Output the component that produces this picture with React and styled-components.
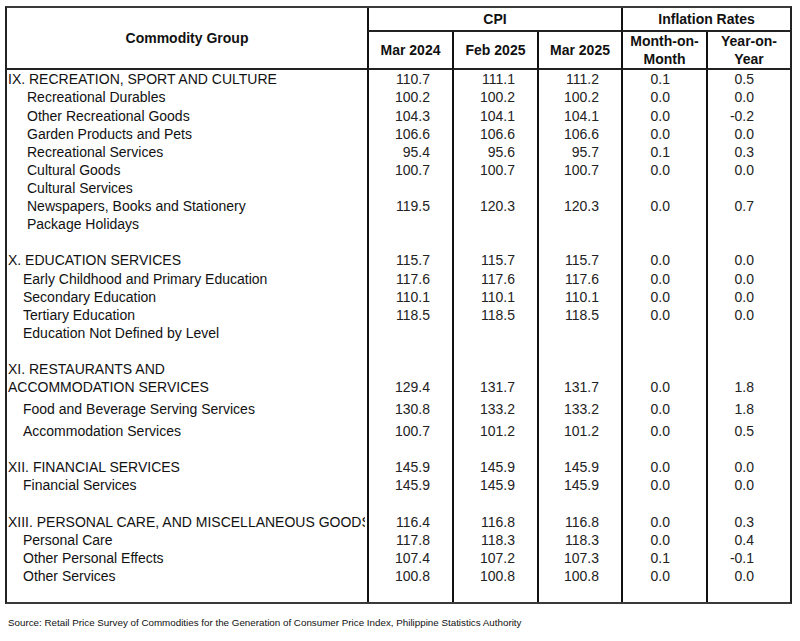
import React from 'react';
import styled, { createGlobalStyle } from 'styled-components';

const GlobalStyle = createGlobalStyle`
  * { box-sizing: border-box; }
  body {
    margin: 0;
    background: #fff;
    font-family: "Liberation Sans", Arial, sans-serif;
    color: #111;
  }
`;

const rows = [
  { label: 'IX. RECREATION, SPORT AND CULTURE', v: ['110.7', '111.1', '111.2', '0.1', '0.5'] },
  { label: 'Recreational Durables', indent: 20, v: ['100.2', '100.2', '100.2', '0.0', '0.0'] },
  { label: 'Other Recreational Goods', indent: 20, h: 19, v: ['104.3', '104.1', '104.1', '0.0', '-0.2'] },
  { label: 'Garden Products and Pets', indent: 20, v: ['106.6', '106.6', '106.6', '0.0', '0.0'] },
  { label: 'Recreational Services', indent: 20, v: ['95.4', '95.6', '95.7', '0.1', '0.3'] },
  { label: 'Cultural Goods', indent: 20, v: ['100.7', '100.7', '100.7', '0.0', '0.0'] },
  { label: 'Cultural Services', indent: 20 },
  { label: 'Newspapers, Books and Stationery', indent: 20, v: ['119.5', '120.3', '120.3', '0.0', '0.7'] },
  { label: 'Package Holidays', indent: 20 },
  { label: '' },
  { label: 'X. EDUCATION SERVICES', v: ['115.7', '115.7', '115.7', '0.0', '0.0'] },
  { label: 'Early Childhood and Primary Education', indent: 16, h: 19, v: ['117.6', '117.6', '117.6', '0.0', '0.0'] },
  { label: 'Secondary Education', indent: 16, v: ['110.1', '110.1', '110.1', '0.0', '0.0'] },
  { label: 'Tertiary Education', indent: 16, v: ['118.5', '118.5', '118.5', '0.0', '0.0'] },
  { label: 'Education Not Defined by Level', indent: 16 },
  { label: '' },
  { label: 'XI. RESTAURANTS AND' },
  { label: 'ACCOMMODATION SERVICES', v: ['129.4', '131.7', '131.7', '0.0', '1.8'] },
  { label: 'Food and Beverage Serving Services', indent: 16, h: 26, v: ['130.8', '133.2', '133.2', '0.0', '1.8'] },
  { label: 'Accommodation Services', indent: 16, v: ['100.7', '101.2', '101.2', '0.0', '0.5'] },
  { label: '' },
  { label: 'XII. FINANCIAL SERVICES', v: ['145.9', '145.9', '145.9', '0.0', '0.0'] },
  { label: 'Financial Services', indent: 16, v: ['145.9', '145.9', '145.9', '0.0', '0.0'] },
  { label: '', h: 19 },
  { label: 'XIII. PERSONAL CARE, AND MISCELLANEOUS GOODS AND SERVICES', v: ['116.4', '116.8', '116.8', '0.0', '0.3'] },
  { label: 'Personal Care', indent: 16, v: ['117.8', '118.3', '118.3', '0.0', '0.4'] },
  { label: 'Other Personal Effects', indent: 16, v: ['107.4', '107.2', '107.3', '0.1', '-0.1'] },
  { label: 'Other Services', indent: 16, v: ['100.8', '100.8', '100.8', '0.0', '0.0'] },
  { label: '', h: 17 },
];

export default function App() {
  return (
    <Page>
      <GlobalStyle />
      <Table>
        <colgroup>
          <col style={{ width: 360 }} />
          <col style={{ width: 85 }} />
          <col style={{ width: 85 }} />
          <col style={{ width: 84 }} />
          <col style={{ width: 85 }} />
          <col style={{ width: 84 }} />
        </colgroup>
        <thead>
          <TopRow>
            <HeadCell rowSpan={2} $first>Commodity Group</HeadCell>
            <HeadCell colSpan={3}>CPI</HeadCell>
            <HeadCell colSpan={2}>Inflation Rates</HeadCell>
          </TopRow>
          <SubRow>
            <HeadCell>Mar 2024</HeadCell>
            <HeadCell>Feb 2025</HeadCell>
            <HeadCell>Mar 2025</HeadCell>
            <HeadCell>Month-on-<br />Month</HeadCell>
            <HeadCell>Year-on-<br />Year</HeadCell>
          </SubRow>
        </thead>
        <tbody>
          {rows.map((r, i) => (
            <BodyRow key={i} $h={r.h || 18}>
              <LabelCell $indent={r.indent || 1}>
                <Clip $w={358 - (r.indent || 1)}>{r.label}</Clip>
              </LabelCell>
              {[0, 1, 2, 3, 4].map(j => (
                <NumCell key={j} $pad={j < 3 ? 22 : 36}>
                  {r.v ? r.v[j] : ''}
                </NumCell>
              ))}
            </BodyRow>
          ))}
        </tbody>
      </Table>
      <Source>
        Source: Retail Price Survey of Commodities for the Generation of Consumer Price Index, Philippine Statistics Authority
      </Source>
    </Page>
  );
}

const Page = styled.div`
  padding: 6px 0 0 5px;
  width: 800px;
  height: 641px;
`;

const Table = styled.table`
  table-layout: fixed;
  width: 787px;
  border-collapse: separate;
  border-spacing: 0;
  border: 2px solid #222;
  border-top-color: #3a3a3a;
  border-bottom-color: #3a3a3a;
  font-size: 14px;
`;

const TopRow = styled.tr`
  height: 24px;
`;

const SubRow = styled.tr`
  height: 38px;
`;

const HeadCell = styled.th`
  padding: 0;
  font-weight: bold;
  font-size: 14px;
  line-height: 18px;
  text-align: center;
  vertical-align: middle;
  color: #111;
  border-left: ${p => (p.$first ? 'none' : '2px solid #111')};
  border-bottom: 2px solid #222;
`;

const BodyRow = styled.tr`
  height: ${p => p.$h}px;
`;

const LabelCell = styled.td`
  padding: 0 0 0 ${p => p.$indent}px;
  vertical-align: middle;
  line-height: 18px;
  overflow: hidden;
`;

const Clip = styled.div`
  width: ${p => p.$w}px;
  overflow: hidden;
  white-space: nowrap;
`;

const NumCell = styled.td`
  padding: 0 ${p => p.$pad}px 0 0;
  text-align: right;
  vertical-align: middle;
  line-height: 18px;
  border-left: 2px solid #111;
  color: #222;
`;

const Source = styled.div`
  margin: 13px 0 0 3px;
  font-size: 9.8px;
  line-height: 11px;
  color: #111;
`;
